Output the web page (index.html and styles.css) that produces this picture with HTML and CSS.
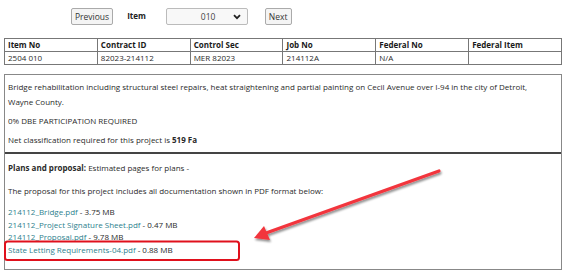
FILE: index.html
```html
<html lang="en">
<head>
    <meta charset="UTF-8">
    <title>Project Item</title>
    <link rel="stylesheet" href="styles.css">
</head>
<body>

    <div class="nav">
        <button class="btn">Previous</button>
        <span class="nav-label">Item</span>
        <div class="select">
            <span>010</span>
            <svg class="chev" width="8" height="6" viewBox="0 0 8 6"><path d="M1 1.2 L4 4.2 L7 1.2" fill="none" stroke="#222" stroke-width="1.8"/></svg>
        </div>
        <button class="btn">Next</button>
    </div>

    <table class="items">
        <thead>
            <tr>
                <th>Item No</th>
                <th>Contract ID</th>
                <th>Control Sec</th>
                <th>Job No</th>
                <th>Federal No</th>
                <th>Federal Item</th>
            </tr>
        </thead>
        <tbody>
            <tr>
                <td>2504 010</td>
                <td>82023-214112</td>
                <td>MER 82023</td>
                <td>214112A</td>
                <td>N/A</td>
                <td></td>
            </tr>
        </tbody>
    </table>

    <div class="details">
        <div class="section">
            <p class="desc">Bridge rehabilitation including structural steel repairs, heat straightening and partial painting on Cecil Avenue over I-94 in the city of Detroit, Wayne County.</p>
            <p>0% DBE PARTICIPATION REQUIRED</p>
            <p>Net classification required for this project is <strong>519 Fa</strong></p>
        </div>
        <div class="section plans">
            <p><strong>Plans and proposal:</strong> Estimated pages for plans -</p>
            <p>The proposal for this project includes all documentation shown in PDF format below:</p>
            <ul class="files">
                <li><a href="#">214112_Bridge.pdf</a> - 3.75 MB</li>
                <li><a href="#">214112_Project Signature Sheet.pdf</a> - 0.47 MB</li>
                <li><a href="#">214112_Proposal.pdf</a> - 9.78 MB</li>
                <li><a href="#">State Letting Requirements-04.pdf</a> - 0.88 MB</li>
            </ul>
        </div>
    </div>

    <!-- annotation drawn over the screenshot -->
    <svg class="markup" width="564" height="271" viewBox="0 0 564 271">
        <defs>
            <filter id="shade" x="-10%" y="-10%" width="120%" height="130%">
                <feDropShadow dx="1" dy="2" stdDeviation="1.2" flood-color="#000" flood-opacity="0.45"/>
            </filter>
        </defs>
        <rect x="5" y="241.5" width="234" height="18.5" rx="2.5" fill="none" stroke="#e0101c" stroke-width="2"/>
        <g filter="url(#shade)">
            <line x1="439" y1="171" x2="266" y2="233" stroke="#f2363e" stroke-width="3.2" stroke-linecap="round"/>
            <path d="M254 238 L264 226 L270 240 Z" fill="#f2363e"/>
        </g>
    </svg>

</body>
</html>
```

FILE: styles.css
```css
body {
    margin: 0;
    font-family: "Open Sans", "Noto Sans", sans-serif;
    font-size: 8px;
    color: #2a2a2a;
    background: #fff;
}

.nav {
    display: flex;
    align-items: center;
    height: 17px;
    padding: 8px 0 0 71px;
}

.btn {
    height: 17px;
    padding: 0 3px;
    font-family: inherit;
    font-size: 8.5px;
    color: #333;
    background: #f4f4f4;
    border: 1px solid #aaa;
    border-radius: 2px;
}

.nav-label {
    font-weight: bold;
    color: #222;
    margin: 0 20px 0 14px;
    position: relative;
    top: -1px;
}

.select {
    height: 15px;
    border: 1px solid #bbb;
    border-radius: 2px;
    background: #f8f8f8;
    display: flex;
    align-items: center;
    justify-content: space-between;
    padding: 0 6px 0 34px;
    box-sizing: content-box;
    width: 40px;
    font-size: 8.5px;
    color: #444;
    margin-right: 17px;
}

.items {
    margin: 13px 0 0 4px;
    width: 558px;
    border-collapse: collapse;
    table-layout: fixed;
}

.items th, .items td {
    border: 1px solid #777;
    text-align: left;
    padding: 0 3px;
    height: 12px;
    line-height: 12px;
    font-size: 8px;
}

.items th {
    color: #1a1a1a;
}

.details {
    margin: 9px 2px 0 4px;
    border: 1px solid #888;
}

.section {
    padding: 4px 3px 5px;
}

.section p {
    margin: 0 0 4px;
    line-height: 15px;
}

.section p:last-child {
    margin-bottom: 0;
}

.desc {
    padding-right: 20px;
}

.plans {
    border-top: 2px solid #444;
    padding-top: 6px;
    padding-bottom: 13px;
}

.plans p {
    margin-bottom: 8px;
}

.files {
    list-style: none;
    margin: 0;
    padding: 0;
    line-height: 12.5px;
}

.files a {
    color: #2e7f8e;
    text-decoration: none;
}

.markup {
    position: absolute;
    top: 0;
    left: 0;
    pointer-events: none;
}
```
